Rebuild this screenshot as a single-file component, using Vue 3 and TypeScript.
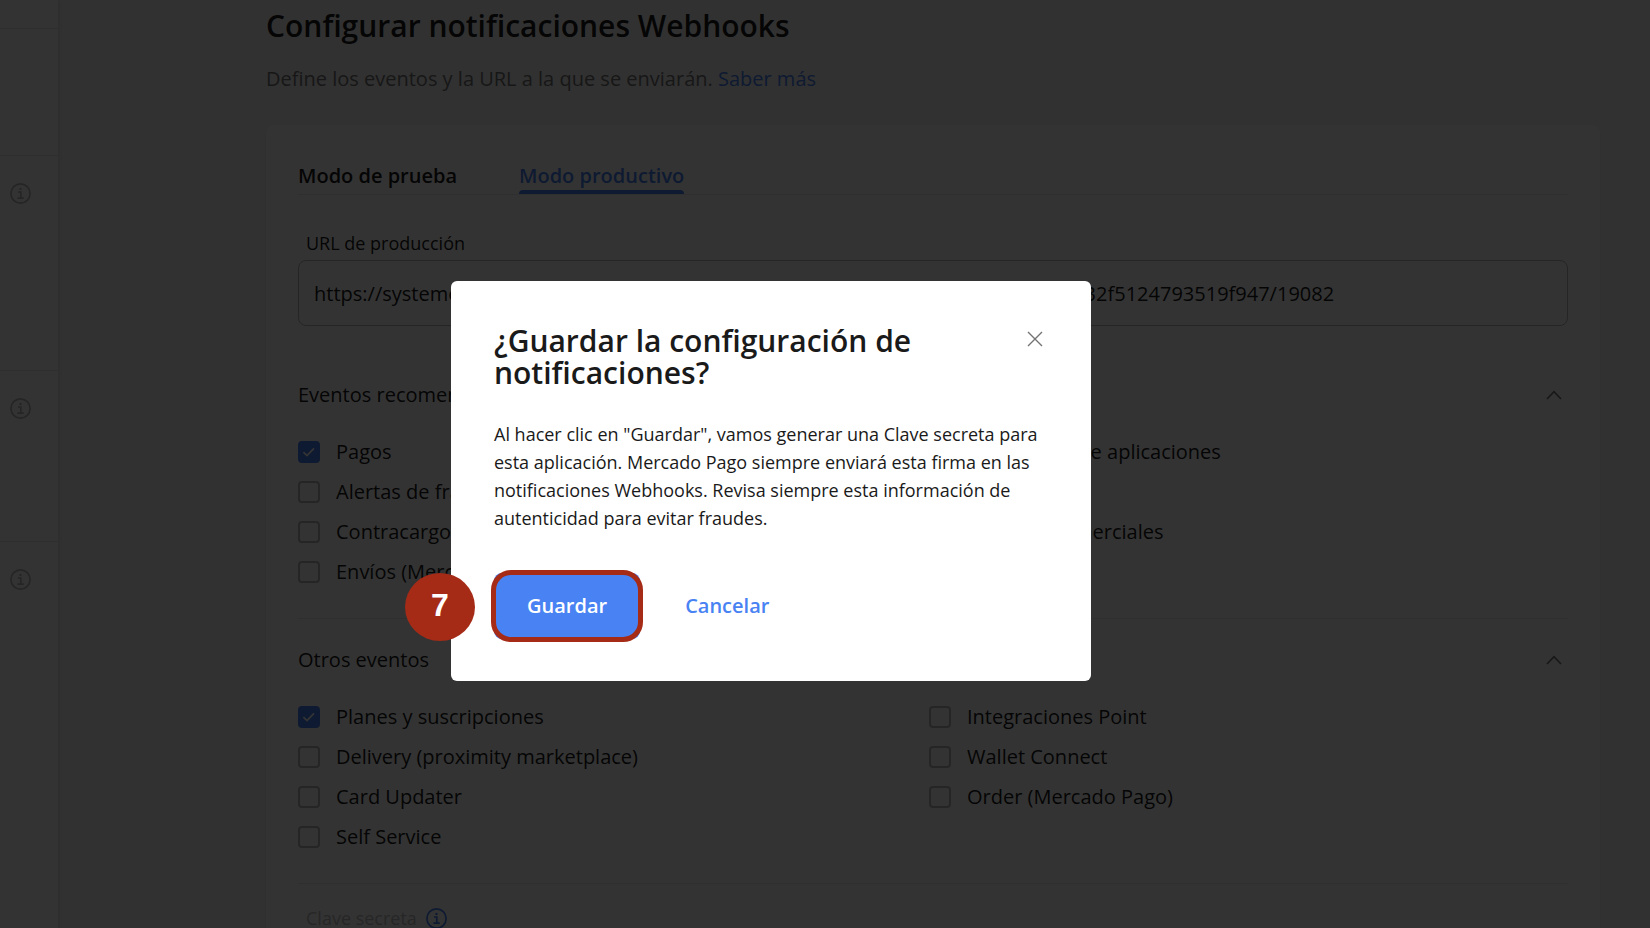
<script setup lang="ts">
import { ref } from 'vue'

interface EventOption {
  id: string
  label: string
  checked: boolean
}

interface EventGroup {
  title: string
  columns: EventOption[][]
}

const option = (id: string, label: string, checked = false): EventOption => ({ id, label, checked })

const url = ref('https://systeme.io/webhook/payments/mercadopago/b7c41e90a6d2482e83a5c0f832f5124793519f947/19082')

const groups = ref<EventGroup[]>([
  {
    title: 'Eventos recomendados',
    columns: [
      [
        option('pagos', 'Pagos', true),
        option('alertas', 'Alertas de fraude'),
        option('contracargos', 'Contracargos'),
        option('envios', 'Envíos (Mercado Pago)'),
      ],
      [
        option('vinculacion', 'Vinculación de aplicaciones'),
        option('reclamos', 'Reclamos'),
        option('ordenes', 'Órdenes comerciales'),
      ],
    ],
  },
  {
    title: 'Otros eventos',
    columns: [
      [
        option('planes', 'Planes y suscripciones', true),
        option('delivery', 'Delivery (proximity marketplace)'),
        option('card', 'Card Updater'),
        option('self', 'Self Service'),
      ],
      [
        option('point', 'Integraciones Point'),
        option('wallet', 'Wallet Connect'),
        option('order', 'Order (Mercado Pago)'),
      ],
    ],
  },
])
</script>

<template>
  <div class="screen">
    <div class="page">
      <aside class="sidebar">
        <div class="side-item side-head"></div>
        <div class="side-item side-short"></div>
        <div class="side-item side-tall">
          <svg class="info" viewBox="0 0 21 21" aria-hidden="true">
            <circle cx="10.5" cy="10.5" r="9.6" />
            <path d="M8 9h2.8v6M7.4 15.2h6.4" />
            <circle class="dot" cx="10.5" cy="5.9" r="1.2" />
          </svg>
        </div>
        <div class="side-item side-mid">
          <svg class="info" viewBox="0 0 21 21" aria-hidden="true">
            <circle cx="10.5" cy="10.5" r="9.6" />
            <path d="M8 9h2.8v6M7.4 15.2h6.4" />
            <circle class="dot" cx="10.5" cy="5.9" r="1.2" />
          </svg>
        </div>
        <div class="side-item">
          <svg class="info" viewBox="0 0 21 21" aria-hidden="true">
            <circle cx="10.5" cy="10.5" r="9.6" />
            <path d="M8 9h2.8v6M7.4 15.2h6.4" />
            <circle class="dot" cx="10.5" cy="5.9" r="1.2" />
          </svg>
        </div>
      </aside>

      <main class="main">
        <h1>Configurar notificaciones Webhooks</h1>
        <p class="lead">
          Define los eventos y la URL a la que se enviarán. <a href="#saber-mas">Saber más</a>
        </p>

        <section class="card">
          <div class="tabs" role="tablist">
            <button type="button" class="tab" role="tab" aria-selected="false">Modo de prueba</button>
            <button type="button" class="tab active" role="tab" aria-selected="true">Modo productivo</button>
          </div>

          <label class="field-label" for="url">URL de producción</label>
          <input id="url" v-model="url" class="field" type="text" />

          <section v-for="group in groups" :key="group.title" class="group">
            <button type="button" class="group-head" aria-expanded="true">
              <span>{{ group.title }}</span>
              <svg class="chevron" viewBox="0 0 16 10" aria-hidden="true">
                <path d="M1 9l7-7.4L15 9" />
              </svg>
            </button>
            <div class="columns">
              <div v-for="(column, i) in group.columns" :key="i" class="column">
                <label v-for="item in column" :key="item.id" class="option" :for="item.id">
                  <span class="box">
                    <input :id="item.id" v-model="item.checked" type="checkbox" />
                    <svg v-if="item.checked" viewBox="0 0 22 22" aria-hidden="true">
                      <path d="M5.4 11.2l3.6 3.4 7-7.2" />
                    </svg>
                  </span>
                  <span>{{ item.label }}</span>
                </label>
              </div>
            </div>
          </section>

          <div class="secret">
            <span>Clave secreta</span>
            <svg class="info blue" viewBox="0 0 21 21" aria-hidden="true">
              <circle cx="10.5" cy="10.5" r="9.6" />
              <path d="M8 9h2.8v6M7.4 15.2h6.4" />
              <circle class="dot" cx="10.5" cy="5.9" r="1.2" />
            </svg>
          </div>
        </section>
      </main>
    </div>

    <div class="overlay">
      <div class="modal" role="dialog" aria-modal="true" aria-labelledby="modal-title">
        <header class="modal-head">
          <h2 id="modal-title">¿Guardar la configuración de notificaciones?</h2>
          <button type="button" class="close" aria-label="Cerrar">
            <svg viewBox="0 0 16 16" aria-hidden="true"><path d="M1 1l14 14M15 1L1 15" /></svg>
          </button>
        </header>
        <p class="modal-text">
          Al hacer clic en "Guardar", vamos generar una Clave secreta para esta aplicación. Mercado
          Pago siempre enviará esta firma en las notificaciones Webhooks. Revisa siempre esta
          información de autenticidad para evitar fraudes.
        </p>
        <div class="actions">
          <div class="marked">
            <button type="button" class="btn primary">Guardar</button>
            <span class="ring"></span>
            <span class="step">7</span>
          </div>
          <button type="button" class="btn link">Cancelar</button>
        </div>
      </div>
    </div>
  </div>
</template>

<style>
body {
  margin: 0;
}
</style>

<style scoped>
.screen {
  position: relative;
  height: 100vh;
  overflow: hidden;
  background: #f5f5f5;
  color: #1a1a1a;
  font-family: 'Open Sans', sans-serif;
  font-size: 20px;
  line-height: 24px;
}

.screen *,
.screen *::before {
  box-sizing: border-box;
}

h1,
h2,
p {
  margin: 0;
}

h1,
h2 {
  font-size: 30px;
  font-weight: 600;
  line-height: 32px;
}

button {
  padding: 0;
  border: 0;
  background: none;
  color: inherit;
  font: inherit;
  cursor: pointer;
}

a {
  color: #4882f3;
  text-decoration: none;
}

.page {
  display: flex;
  min-height: 100%;
}

.sidebar {
  flex: none;
  width: 58px;
  background: #fff;
  box-shadow: 0 0 6px rgba(0, 0, 0, 0.16);
}

.side-item {
  padding: 27px 10px 0;
}

.side-item + .side-item {
  border-top: 1px solid #e5e5e5;
}

.side-head {
  height: 28px;
}

.side-short {
  height: 127px;
}

.side-tall {
  height: 215px;
}

.side-mid {
  height: 171px;
}

.info {
  display: block;
  flex: none;
  width: 21px;
  height: 21px;
  fill: none;
  stroke: #b8b8b8;
  stroke-width: 1.7;
}

.info .dot {
  fill: #b8b8b8;
  stroke: none;
}

.info.blue {
  stroke: #4882f3;
}

.info.blue .dot {
  fill: #4882f3;
}

.main {
  flex: 1;
  min-width: 0;
  padding: 10px 50px 0 208px;
}

.lead {
  margin-top: 25px;
  color: #737373;
}

.card {
  margin-top: 34px;
  padding: 39px 32px 60px;
  border-radius: 8px;
  background: #fff;
  box-shadow: 0 1px 2px rgba(0, 0, 0, 0.12);
}

.tabs {
  display: flex;
  gap: 62px;
  border-bottom: 1px solid #ebebeb;
}

.tab {
  padding-bottom: 6px;
  font-weight: 600;
}

.tab.active {
  position: relative;
  color: #4882f3;
}

.tab.active::before {
  content: '';
  position: absolute;
  right: 0;
  bottom: 0;
  left: 0;
  height: 4px;
  border-radius: 4px 4px 0 0;
  background: #4882f3;
}

.field-label {
  display: block;
  margin: 36px 8px 5px;
  font-size: 18px;
}

.field {
  display: block;
  width: 100%;
  height: 66px;
  padding: 0 15px;
  border: 1px solid #b8b8b8;
  border-radius: 8px;
  background: #fff;
  color: #1a1a1a;
  font: inherit;
}

.group {
  padding-bottom: 34px;
  border-bottom: 1px solid #ebebeb;
}

.field + .group {
  margin-top: 57px;
}

.group + .group {
  margin-top: 29px;
}

.group-head {
  display: flex;
  align-items: center;
  justify-content: space-between;
  width: 100%;
  padding-right: 6px;
}

.chevron {
  width: 16px;
  height: 10px;
  fill: none;
  stroke: #737373;
  stroke-width: 1.6;
}

.columns {
  display: grid;
  grid-template-columns: 1fr 1fr;
  margin-top: 33px;
  padding-right: 8px;
}

.column {
  display: flex;
  flex-direction: column;
  gap: 16px;
}

.option {
  display: flex;
  align-items: center;
  gap: 16px;
}

.box {
  position: relative;
  width: 22px;
  height: 22px;
}

.box input {
  display: block;
  width: 22px;
  height: 22px;
  margin: 0;
  border: 2px solid #b8b8b8;
  border-radius: 4px;
  background: #fff;
  appearance: none;
}

.box input:checked {
  border-color: #4882f3;
  background: #4882f3;
}

.box svg {
  position: absolute;
  inset: 0;
  fill: none;
  stroke: #fff;
  stroke-width: 1.8;
  pointer-events: none;
}

.secret {
  display: flex;
  align-items: center;
  gap: 9px;
  margin: 22px 8px 0;
  color: #bfbfbf;
  font-size: 18px;
}

.overlay {
  position: absolute;
  inset: 0;
  display: flex;
  align-items: center;
  justify-content: center;
  padding: 34px 108px 0 0;
  background: rgba(0, 0, 0, 0.8);
}

.modal {
  width: 640px;
  padding: 44px 42px 42px 43px;
  border-radius: 6px;
  background: #fff;
}

.modal-head {
  display: flex;
  align-items: flex-start;
  justify-content: space-between;
  gap: 60px;
}

.close {
  display: flex;
  flex: none;
  align-items: center;
  justify-content: center;
  width: 28px;
  height: 28px;
}

.close svg {
  width: 16px;
  height: 16px;
  fill: none;
  stroke: #737373;
  stroke-width: 1.4;
}

.modal-text {
  margin-top: 31px;
  font-size: 18px;
  line-height: 28px;
}

.actions {
  display: flex;
  gap: 12px;
  margin-top: 41px;
}

.marked {
  position: relative;
}

.btn {
  height: 66px;
  padding: 0 33px;
  border-radius: 8px;
  font-weight: 600;
}

.primary {
  background: #4882f3;
  color: #fff;
}

.link {
  color: #4882f3;
}

.ring {
  position: absolute;
  inset: -3px;
  border: 5px solid #a52b17;
  border-radius: 20px;
  pointer-events: none;
}

.step {
  position: absolute;
  top: 0;
  left: -89px;
  display: flex;
  align-items: center;
  justify-content: center;
  width: 70px;
  height: 68px;
  padding-bottom: 4px;
  border-radius: 50%;
  background: #a52b17;
  color: #fff;
  font-family: 'Liberation Sans', sans-serif;
  font-size: 32px;
  font-weight: 700;
}
</style>
